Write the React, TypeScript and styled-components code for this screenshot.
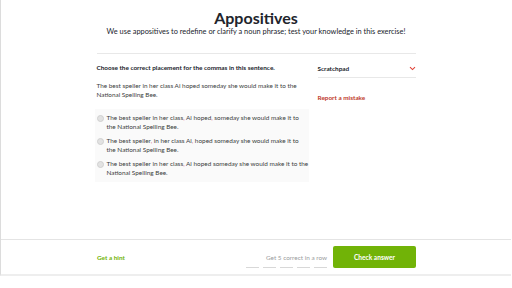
import { styled, createGlobalStyle } from 'styled-components';

const GlobalStyle = createGlobalStyle`
  html, body {
    margin: 0;
    padding: 0;
    background: #ffffff;
  }
  body {
    font-family: Lato, 'Open Sans', Arial, sans-serif;
    color: #21242c;
  }
`;

const Page = styled.div`
  display: flex;
  flex-direction: column;
  width: 511px;
  height: 276px;
  border-left: 1px solid #dcdcdc;
  border-bottom: 2px solid #eeeeee;
  box-sizing: border-box;
`;

const Header = styled.header`
  display: flex;
  flex-direction: column;
  align-items: center;
  padding-top: 9px;
`;

const Title = styled.h1`
  margin: 0;
  font-size: 16px;
  font-weight: 700;
  line-height: 17px;
  color: #21242c;
`;

const Subtitle = styled.p`
  margin: 1px 0 0;
  font-size: 7.4px;
  line-height: 10px;
  color: #21242c;
`;

const Main = styled.main`
  display: flex;
  flex: 1;
  justify-content: space-between;
  width: 319px;
  margin: 16px auto 0;
  padding-top: 9px;
  border-top: 1px solid #e8e8e8;
`;

const LeftColumn = styled.section`
  display: flex;
  flex-direction: column;
  width: 210px;
`;

const Question = styled.p`
  margin: 0;
  font-size: 6.4px;
  font-weight: 700;
  line-height: 9px;
`;

const Sentence = styled.p`
  margin: 9px 0 0;
  font-size: 6.4px;
  line-height: 9px;
  color: #3b3e40;
`;

const Options = styled.div`
  display: flex;
  flex-direction: column;
  gap: 5px;
  margin: 10px -2px 0 -2px;
  padding: 4px 0 5px 2px;
  background: #fafafa;
`;

const Option = styled.label`
  display: flex;
  align-items: flex-start;
  gap: 3px;
  font-size: 6.4px;
  line-height: 9px;
  color: #3b3e40;
`;

const OptionText = styled.span`
  flex: 1;
`;

const Radio = styled.span`
  flex: none;
  width: 5px;
  height: 5px;
  margin-top: 2px;
  border-radius: 50%;
  background: #e2e2e2;
  border: 0.5px solid #d0d0d0;
`;

const Comma = styled.span`
  color: #e0607a;
`;

const RightColumn = styled.aside`
  display: flex;
  flex-direction: column;
  width: 98px;
`;

const Scratchpad = styled.div`
  display: flex;
  align-items: center;
  justify-content: space-between;
  padding: 1px 0 4px;
  border-bottom: 1px solid #e8e8e8;
  font-size: 6.4px;
  font-weight: 700;
  line-height: 9px;
`;

const ReportLink = styled.a`
  margin-top: 15px;
  font-size: 6.4px;
  font-weight: 700;
  line-height: 9px;
  color: #c0392b;
  text-decoration: none;
`;

const Footer = styled.footer`
  display: flex;
  align-items: center;
  justify-content: space-between;
  height: 34px;
  padding: 0 95px 0 96px;
  border-top: 1px solid #e4e4e4;
`;

const HintLink = styled.a`
  font-size: 6.4px;
  font-weight: 700;
  color: #71b307;
  text-decoration: none;
`;

const FooterRight = styled.div`
  display: flex;
  align-items: center;
  gap: 6px;
`;

const Progress = styled.div`
  display: flex;
  flex-direction: column;
  align-items: flex-end;
  gap: 5px;
  padding-top: 8px;
`;

const ProgressText = styled.span`
  font-size: 6.4px;
  line-height: 8px;
  color: #9a9c9e;
`;

const Dashes = styled.div`
  display: flex;
  gap: 4px;
`;

const Dash = styled.span`
  width: 13px;
  height: 1px;
  background: #d8d8d8;
`;

const CheckButton = styled.button`
  width: 83px;
  height: 22px;
  border: none;
  border-radius: 2px;
  background: #71b307;
  color: #ffffff;
  font-family: inherit;
  font-size: 6.6px;
  font-weight: 700;
`;

const options = [
  ['The best speller in her class', ' Ai hoped', ' someday she would make it to the National Spelling Bee.'],
  ['The best speller', ' in her class Ai', ' hoped someday she would make it to the National Spelling Bee.'],
  ['The best speller in her class', ' Ai hoped someday she would make it to the National Spelling Bee.'],
];

function App() {
  return (
    <>
      <GlobalStyle />
      <Page>
        <Header>
          <Title>Appositives</Title>
          <Subtitle>
            We use appositives to redefine or clarify a noun phrase; test your knowledge in this exercise!
          </Subtitle>
        </Header>

        <Main>
          <LeftColumn>
            <Question>Choose the correct placement for the commas in this sentence.</Question>
            <Sentence>
              The best speller in her class Ai hoped someday she would make it to the National Spelling Bee.
            </Sentence>
            <Options>
              {options.map((parts, i) => (
                <Option key={i}>
                  <Radio />
                  <OptionText>
                    {parts[0]}
                    <Comma>,</Comma>
                    {parts[1]}
                    {parts[2] && <Comma>,</Comma>}
                    {parts[2]}
                  </OptionText>
                </Option>
              ))}
            </Options>
          </LeftColumn>

          <RightColumn>
            <Scratchpad>
              Scratchpad
              <svg width="7" height="5" viewBox="0 0 7 5">
                <path d="M1 1.2 L3.5 3.6 L6 1.2" fill="none" stroke="#e0443a" strokeWidth="1.1" />
              </svg>
            </Scratchpad>
            <ReportLink href="#">Report a mistake</ReportLink>
          </RightColumn>
        </Main>

        <Footer>
          <HintLink href="#">Get a hint</HintLink>
          <FooterRight>
            <Progress>
              <ProgressText>Get 5 correct in a row</ProgressText>
              <Dashes>
                {[0, 1, 2, 3, 4].map((i) => (
                  <Dash key={i} />
                ))}
              </Dashes>
            </Progress>
            <CheckButton>Check answer</CheckButton>
          </FooterRight>
        </Footer>
      </Page>
    </>
  );
}

export default App;
